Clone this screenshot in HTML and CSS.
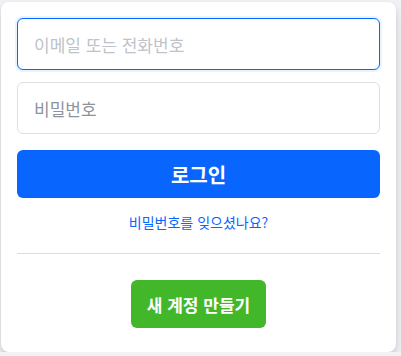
FILE: index.html
```html
<!DOCTYPE html>
<html lang="ko">
<head>
    <meta charset="UTF-8">
    <meta name="viewport" content="width=device-width, initial-scale=1.0">
    <title>로그인</title>
    <link rel="stylesheet" href="styles.css">
</head>
<body>
    <div class="login-card">
        <form class="login-form">
            <input type="text" class="field is-focus" placeholder="이메일 또는 전화번호">
            <input type="password" class="field" placeholder="비밀번호">
            <button type="submit" class="btn-login">로그인</button>
        </form>
        <a href="#" class="forgot">비밀번호를 잊으셨나요?</a>
        <div class="divider"></div>
        <div class="signup-row">
            <button type="button" class="btn-signup">새 계정 만들기</button>
        </div>
    </div>
</body>
</html>
```

FILE: styles.css
```css
body {
    margin: 0;
    padding: 2px 0 0 1px;
    background: #f0f2f5;
    font-family: "Noto Sans CJK KR", "Noto Sans", sans-serif;
}
.login-card {
    box-sizing: border-box;
    width: 395px;
    height: 350px;
    padding: 16px 16px 24px;
    background: #fff;
    border-radius: 8px;
    box-shadow: 0 2px 4px rgba(0, 0, 0, 0.1), 0 8px 16px rgba(0, 0, 0, 0.1);
}
.login-form {
    display: flex;
    flex-direction: column;
}
.field {
    box-sizing: border-box;
    height: 52px;
    margin-bottom: 12px;
    padding: 0 16px;
    border: 1px solid #dddfe2;
    border-radius: 6px;
    font-family: inherit;
    font-size: 17px;
    color: #1c1e21;
    outline: none;
}
.field::placeholder {
    color: #8d949e;
}
.field.is-focus {
    border-color: #0866ff;
    box-shadow: 0 0 0 2px #e7f3ff;
}
.field.is-focus::placeholder {
    color: #bec3c9;
}
.btn-login {
    height: 48px;
    margin-top: 4px;
    border: none;
    border-radius: 6px;
    background: #0866ff;
    color: #fff;
    font-family: inherit;
    font-size: 20px;
    font-weight: bold;
    cursor: pointer;
}
.forgot {
    display: block;
    margin-top: 14px;
    text-align: center;
    font-size: 14px;
    line-height: 20px;
    color: #0866ff;
    text-decoration: none;
}
.divider {
    height: 1px;
    margin: 21px 0 26px;
    background: #dadde1;
}
.signup-row {
    display: flex;
    justify-content: center;
}
.btn-signup {
    height: 48px;
    padding: 0 16px;
    border: none;
    border-radius: 6px;
    background: #42b72a;
    color: #fff;
    font-family: inherit;
    font-size: 17px;
    font-weight: bold;
    cursor: pointer;
}
```
